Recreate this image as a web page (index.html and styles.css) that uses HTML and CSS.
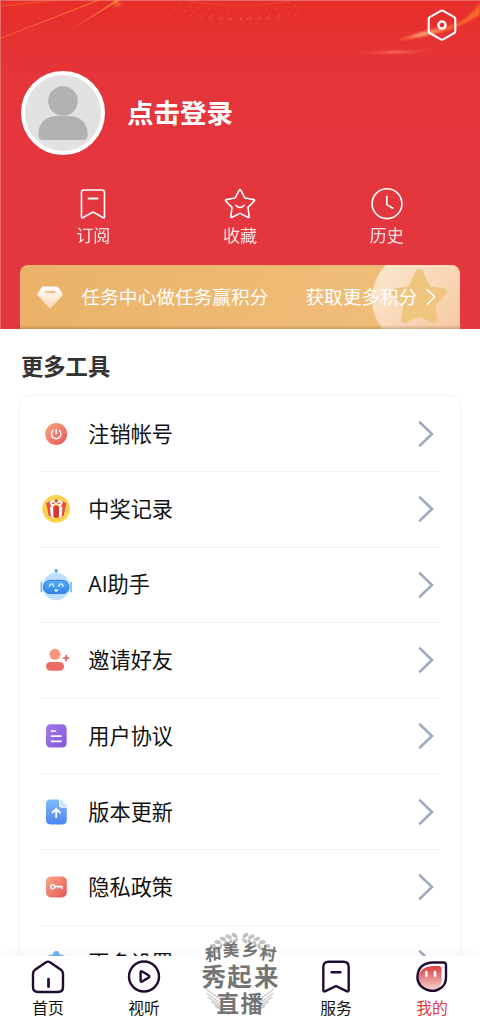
FILE: index.html
```html
<!DOCTYPE html>
<html lang="zh-CN">
<head>
<meta charset="utf-8">
<meta name="viewport" content="width=device-width">
<title>我的</title>
<link rel="stylesheet" href="styles.css">
</head>
<body>
<div class="app">
  <header class="hero">
    <svg class="hero-art" width="480" height="80" viewBox="0 0 480 80">
      <defs>
        <linearGradient id="ray" x1="0" x2="1" y1="1" y2="0"><stop offset="0" stop-color="#ff8a3c" stop-opacity=".45"/><stop offset="1" stop-color="#ff9a35" stop-opacity=".75"/></linearGradient>
        <linearGradient id="ray2" x1="0" x2="1" y1="1" y2="0"><stop offset="0" stop-color="#ff7a2c" stop-opacity="0"/><stop offset="1" stop-color="#ffa045"/></linearGradient>
        <linearGradient id="flare" gradientUnits="userSpaceOnUse" x1="395" y1="41" x2="480" y2="8"><stop offset="0" stop-color="#ff6a20" stop-opacity=".6"/><stop offset=".3" stop-color="#ffa27a"/><stop offset=".65" stop-color="#ff7030" stop-opacity=".8"/><stop offset="1" stop-color="#ff7a2c" stop-opacity=".75"/></linearGradient>
        <linearGradient id="flare2" gradientUnits="userSpaceOnUse" x1="350" y1="53" x2="440" y2="45"><stop offset="0" stop-color="#ff7040" stop-opacity=".1"/><stop offset=".5" stop-color="#ff8a70" stop-opacity=".85"/><stop offset="1" stop-color="#ff6030" stop-opacity=".15"/></linearGradient>
        <filter id="soft" x="-20%" y="-50%" width="140%" height="200%"><feGaussianBlur stdDeviation=".8"/></filter>
        <filter id="glow" x="-100%" y="-100%" width="300%" height="300%"><feGaussianBlur stdDeviation="2"/></filter>
      </defs>
      <path d="M0 38.5 99 0" stroke="url(#ray)" fill="none"/>
      <path d="M0 6 60 0" stroke="#ff7a30" stroke-opacity=".3" stroke-width="2" fill="none"/>
      <path d="M69 31 118 0" stroke="url(#ray2)" stroke-width="1.3" fill="none"/>
      <circle cx="117" cy="3" r="2.6" fill="#ff9440" filter="url(#glow)"/>
      <g fill="none" stroke="#ff9a88" stroke-opacity=".28" stroke-width="1.4" stroke-dasharray="1.6 8">
        <path d="M174 8q66 20 132 0"/><path d="M184 14q56 10 115 0" stroke-dashoffset="4"/><path d="M180 4q60 13 124 0"/><path d="M195 18q45 3 92 0" stroke-dashoffset="3"/>
      </g>
      <path d="M188 1q52 9 104 0" fill="none" stroke="#ff8b70" stroke-opacity=".18" stroke-width="1.5"/>
      <path d="M395 41Q425 30 445 27T480 3V15Q462 26 445 31T395 41Z" fill="url(#flare)" filter="url(#soft)"/>
      <path d="M352 53.5Q385 50.5 405 51T441 46Q425 53 405 53T352 53.5Z" fill="url(#flare2)" filter="url(#soft)"/>
    </svg>
    <div class="topbar">
      <svg class="settings" width="30" height="34" viewBox="0 0 30 34" fill="none" stroke="#fff" stroke-linejoin="round"><path stroke-width="2.1" d="M13.8 1.8Q15 1.1 16.2 1.8L27.3 8.2Q28.3 8.8 28.3 10V22.2Q28.3 23.4 27.3 24L16.2 30.4Q15 31.1 13.8 30.4L2.7 24Q1.7 23.4 1.7 22.2V10Q1.7 8.8 2.7 8.2Z"/><circle cx="15" cy="16.1" r="3.6" stroke-width="2.3"/></svg>
    </div>
    <div class="profile">
      <div class="avatar">
        <svg width="50" height="55" viewBox="0 0 50 55" fill="#b2b2b2"><circle cx="25" cy="15" r="14.8"/><path d="M.3 48C.3 36 9 30 19 30H31C41 30 49.7 36 49.7 48V49Q49.7 54 44.7 54H5.3Q.3 54 .3 49Z"/></svg>
      </div>
      <span class="login">点击登录</span>
    </div>
    <div class="shortcuts">
      <a class="shortcut">
        <svg width="34" height="34" viewBox="0 0 34 34"><path d="M8 3H26Q28.5 3 28.5 5.5V29.5Q28.5 31.5 26.8 30.5L17 25 7.2 30.5Q5.5 31.5 5.5 29.5V5.5Q5.5 3 8 3Z"/><path d="M12.5 11.5H21.5" stroke-width="2"/></svg>
        <span>订阅</span>
      </a>
      <a class="shortcut">
        <svg width="34" height="34" viewBox="0 0 34 34"><path d="M16.2 3.2Q17 2 17.8 3.2L21.9 11 30.8 12.6Q32.1 13 31.2 14.1L25 20.4 26.2 29.4Q26.2 30.8 24.9 30.3L17 26.4 9.1 30.3Q7.8 30.8 7.8 29.4L9 20.4 2.8 14.1Q1.9 13 3.2 12.6L12.1 11Z"/><path d="M12.9 18.4Q17 22.6 21.1 18.4"/></svg>
        <span>收藏</span>
      </a>
      <a class="shortcut">
        <svg width="34" height="34" viewBox="0 0 34 34"><circle cx="17" cy="16.7" r="14.9"/><path d="M16.8 9.3V17.6L22.8 21.3"/></svg>
        <span>历史</span>
      </a>
    </div>
    <div class="banner">
      <svg class="banner-art" width="90" height="64" viewBox="0 0 90 64">
        <defs><linearGradient id="disc" x1="0" y1="0" x2="1" y2="1"><stop offset="0" stop-color="#fdebd4"/><stop offset="1" stop-color="#f5c49a"/></linearGradient></defs>
        <circle cx="50" cy="34" r="48" fill="url(#disc)"/>
        <path d="M49.3 8 57.4 25.2 72.5 27.2 60.8 39.8 63.6 54 49.3 47.2 35 54 37.8 39.8 26.1 27.2 41.2 25.2Z" fill="#f0c580" stroke="#f0c580" stroke-width="8" stroke-linejoin="round"/>
      </svg>
      <svg class="gem" width="26" height="23" viewBox="0 0 26 23"><defs><linearGradient id="gemfill" x1="0" y1="0" x2="0" y2="1"><stop stop-color="#fff"/><stop offset="1" stop-color="#ffd5b3"/></linearGradient></defs><path d="M6.3 .5H19.7Q20.8 .5 21.5 1.4L25.3 7.3Q26 8.5 25.1 9.6L14.4 21.5Q13 23 11.6 21.5L.9 9.6Q0 8.5 .7 7.3L4.5 1.4Q5.2 .5 6.3 .5Z" fill="url(#gemfill)"/><path d="M8.7 6.1H17.5" stroke="#efbd80" stroke-width="2" stroke-linecap="round"/></svg>
      <span class="task">任务中心做任务赢积分</span>
      <span class="more">获取更多积分</span>
      <svg class="banner-arrow" width="10" height="18" viewBox="0 0 10 18"><path d="M1.2 1.6 8.8 8.8 1.2 16.2" fill="none" stroke="#fff" stroke-width="1.5" stroke-linecap="round" stroke-linejoin="round"/></svg>
    </div>
  </header>

  <main class="tools">
    <h2>更多工具</h2>
    <ul class="card">
      <li class="row">
        <svg class="icon" width="32" height="32" viewBox="0 0 32 32"><defs><linearGradient id="coral" x1="0" y1="0" x2="1" y2="1"><stop stop-color="#fba783"/><stop offset="1" stop-color="#e4575a"/></linearGradient></defs><circle cx="16.2" cy="16" r="11" fill="url(#coral)"/><path d="M16.2 11.5V15.4M13 12.6A4.7 4.7 0 1 0 19.4 12.6" fill="none" stroke="#fff" stroke-width="1.4" stroke-linecap="round"/></svg>
        <span>注销帐号</span><svg class="arrow" viewBox="0 0 16 28"><path d="M2 2.5 14 14 2 25.5"/></svg>
      </li>
      <li class="row">
        <svg class="icon" width="32" height="32" viewBox="0 0 32 32"><circle cx="16.2" cy="15.8" r="13.9" fill="#fcd251"/><path d="M6.5 11 11.5 9.5V24.5L8.6 22.5ZM20.8 9.5 26 11 23.7 22.5 20.8 24.5Z" fill="#e04b3c"/><path d="M9.8 12.5 13.4 12V24.6L10.8 23.8ZM19 12 22.6 12.5 21.6 23.8 19 24.6Z" fill="#fff"/><path d="M13.4 13.5 16.2 12.5 19 13.5V24L16.2 25 13.4 24Z" fill="#d63a36"/><path d="M6 10.2 11 7.6 14 12 9.5 14.5 7.2 14ZM26.4 10.2 21.4 7.6 18.4 12 22.9 14.5 25.2 14Z" fill="#ee5147"/><path d="M9.4 9 12.6 6.8 16.2 9.6 19.8 6.8 23 9 21 13.2 17.8 11.4H14.6L11.4 13.2Z" fill="#fff"/><circle cx="16.2" cy="7.9" r="1.7" fill="#e44945"/><path d="M12.2 9.8 14.6 10.7M20.2 9.8 17.8 10.7" stroke="#e04b3c" stroke-width="1.3"/></svg>
        <span>中奖记录</span><svg class="arrow" viewBox="0 0 16 28"><path d="M2 2.5 14 14 2 25.5"/></svg>
      </li>
      <li class="row">
        <svg class="icon" width="32" height="34" viewBox="0 0 32 34"><defs><linearGradient id="visor" x1="0" y1="0" x2="0" y2="1"><stop stop-color="#58adfa"/><stop offset="1" stop-color="#3385e6"/></linearGradient></defs><path d="M16.2 2.5V6" stroke="#4a9ff4" stroke-width="1.3"/><circle cx="16.2" cy="2.5" r="1.6" fill="#4a9ff4"/><circle cx="16.2" cy="18.5" r="13.7" fill="#bfe0fb"/><path d="M1.4 14.4V23.6M31 14.4V23.6" stroke="#72b9f5" stroke-width="1.7" stroke-linecap="round"/><rect x="3.5" y="12.4" width="25.4" height="13.2" rx="6.4" fill="url(#visor)" stroke="#2c7bdf" stroke-width="1"/><path d="M9.4 18.3Q10 15.8 11.6 15.8T13.7 18.3M18.7 18.3Q19.2 15.8 20.9 15.8T23 18.3" fill="none" stroke="#e4f4ff" stroke-width="1.3" stroke-linecap="round"/><path d="M14 21.6H18.4Q17.8 23.8 16.2 23.8T14 21.6Z" fill="#fff"/></svg>
        <span class="latin-mix">AI助手</span><svg class="arrow" viewBox="0 0 16 28"><path d="M2 2.5 14 14 2 25.5"/></svg>
      </li>
      <li class="row">
        <svg class="icon" width="32" height="32" viewBox="0 0 32 32"><circle cx="15" cy="10.3" r="5.5" fill="#fa967b"/><rect x="6" y="18" width="18" height="8.8" rx="4.4" fill="#ec6c65"/><path d="M26.2 11.1V17.3M23.1 14.2H29.3" stroke="#e4636a" stroke-width="1.8"/></svg>
        <span>邀请好友</span><svg class="arrow" viewBox="0 0 16 28"><path d="M2 2.5 14 14 2 25.5"/></svg>
      </li>
      <li class="row">
        <svg class="icon" width="32" height="32" viewBox="0 0 32 32"><defs><linearGradient id="violet" x1="0" y1="0" x2="1" y2="1"><stop stop-color="#a27be9"/><stop offset="1" stop-color="#8057de"/></linearGradient></defs><rect x="6" y="4.2" width="20.6" height="23.4" rx="4.4" fill="url(#violet)"/><path d="M11.5 11H15.4M11.5 16.2H21M11.5 21.4H21" stroke="#fff" stroke-width="1.7" stroke-linecap="round"/></svg>
        <span>用户协议</span><svg class="arrow" viewBox="0 0 16 28"><path d="M2 2.5 14 14 2 25.5"/></svg>
      </li>
      <li class="row">
        <svg class="icon" width="32" height="32" viewBox="0 0 32 32"><defs><linearGradient id="azure" x1="0" y1="0" x2="0" y2="1"><stop stop-color="#80baf6"/><stop offset="1" stop-color="#4d85f2"/></linearGradient></defs><path d="M10.4 3.6H19V8.5Q19 11.8 22.3 11.8H26.8V24Q26.8 28.4 22.4 28.4H10.4Q6 28.4 6 24V8Q6 3.6 10.4 3.6Z" fill="url(#azure)"/><path d="M20.7 4Q21.4 8 26.5 10.2H22.7Q20.7 10.2 20.7 8.2ZM21 4 26.5 9.8" fill="#c4e2ff" stroke="#c4e2ff"/><path d="M16.2 21.3V13.2M12.5 16.5 16.2 12.8 19.9 16.5" fill="none" stroke="#fff" stroke-width="1.8" stroke-linecap="round" stroke-linejoin="round"/></svg>
        <span>版本更新</span><svg class="arrow" viewBox="0 0 16 28"><path d="M2 2.5 14 14 2 25.5"/></svg>
      </li>
      <li class="row">
        <svg class="icon" width="32" height="32" viewBox="0 0 32 32"><rect x="6" y="5.4" width="20.8" height="21" rx="4.8" fill="url(#coral)"/><path d="M15.2 15.5H21.9V17.9M18.9 15.5V17.3" fill="none" stroke="#fff" stroke-width="1.5"/><circle cx="12.8" cy="15.8" r="2" fill="none" stroke="#fff" stroke-width="1.5"/></svg>
        <span>隐私政策</span><svg class="arrow" viewBox="0 0 16 28"><path d="M2 2.5 14 14 2 25.5"/></svg>
      </li>
      <li class="row">
        <svg class="icon" width="32" height="32" viewBox="0 0 32 32"><path d="M13.2 7Q13.2 4 16.2 4T19.2 7L24.8 8.8V24L16 28 7.6 24V8.8Z" fill="#72aff3"/></svg>
        <span>更多设置</span><svg class="arrow" viewBox="0 0 16 28"><path d="M2 2.5 14 14 2 25.5"/></svg>
      </li>
    </ul>
  </main>

  <nav class="tabs">
    <a class="tab"><svg width="34" height="34" viewBox="0 0 34 34"><path d="M14.7 2.4Q17 .8 19.3 2.4L29.6 9.6Q32 11.3 32 14V27Q32 32 27 32H7Q2 32 2 27V14Q2 11.3 4.4 9.6Z"/><path d="M17.5 19V26.7" stroke-width="2.7"/></svg><span>首页</span></a>
    <a class="tab"><svg width="34" height="34" viewBox="0 0 34 34"><circle cx="17" cy="16.5" r="15"/><path d="M13.6 12.5Q13.6 10.6 15.3 11.5L21.4 15.2Q23.3 16.5 21.4 17.7L15.3 21.4Q13.6 22.3 13.6 20.4Z"/></svg><span>视听</span></a>
    <a class="tab live">
      <svg class="live-logo" width="84" height="92" viewBox="0 0 84 92">
        <defs>
          <g id="leaf"><ellipse cx="42" cy="7" rx="3.4" ry="1.9" transform="rotate(-42 42 7)"/><ellipse cx="42" cy="12.4" rx="3.2" ry="1.7" transform="rotate(38 42 12.4)"/></g>
          <g id="branch"><use href="#leaf" transform="rotate(8 42 46)"/><use href="#leaf" transform="rotate(17 42 46)"/><use href="#leaf" transform="rotate(26 42 46)"/><use href="#leaf" transform="rotate(35 42 46)"/><use href="#leaf" transform="rotate(44 42 46)"/><use href="#leaf" transform="rotate(53 42 46)"/></g>
          <g id="grain" fill="none" stroke="#cbcbcb" stroke-width="1.5"><path d="M61 72 76 61M61 75.5 75.5 65M60 79 74 69M57 83 71 73.5M53 86.5 67 78"/></g>
        </defs>
        <circle cx="42" cy="46" r="44" fill="#fff"/>
        <g fill="#c2c2c2"><use href="#branch"/><use href="#branch" transform="translate(84) scale(-1 1)"/></g>
        <use href="#grain"/><use href="#grain" transform="translate(84) scale(-1 1)"/>
        <g class="live-small"><text transform="translate(7.5 33.5) rotate(-9) skewX(-5)">和</text><text transform="translate(25 28.5) rotate(-3)">美</text><text transform="translate(43.5 27.5) rotate(5)">乡</text><text transform="translate(61 30.5) rotate(9)">村</text></g>
        <g class="live-big"><text x="3.5" y="57.5">秀</text><text x="29.3" y="57.5">起</text><text x="56" y="57.5">来</text></g>
        <g class="live-mid"><text x="18.5" y="83.5">直</text><text x="42.5" y="83.5">播</text></g>
      </svg>
    </a>
    <a class="tab"><svg width="34" height="34" viewBox="0 0 34 34"><path d="M9.5 1.8H24.5Q29.7 1.8 29.7 7V29.8Q29.7 32.2 27.5 31.2L17 26 6.5 31.2Q4.3 32.2 4.3 29.8V7Q4.3 1.8 9.5 1.8Z"/><path d="M12.7 12.3H21.3" stroke-width="2.5"/></svg><span>服务</span></a>
    <a class="tab active"><svg width="34" height="34" viewBox="0 0 34 34"><defs><linearGradient id="face" x1="0" y1="0" x2="0" y2="1"><stop stop-color="#df3941"/><stop offset="1" stop-color="#faded9"/></linearGradient></defs><path d="M18 6H23.5Q26.5 6 26.5 9V17A11.8 11.8 0 1 1 3.5 17Q4.5 7 18 6Z" fill="url(#face)" stroke="none"/><path d="M17 2.5H28.5Q31 2.5 31 5V17Q31 24 26.5 27.5Q21 32 14.5 30.5Q2.5 27.5 2.4 17Q3 3.5 17 2.5Z"/><path d="M11.4 12V16M20 12V16" stroke="#fff" stroke-width="2.6"/></svg><span>我的</span></a>
  </nav>
</div>
</body>
</html>
```
FILE: styles.css
```css
* { box-sizing: border-box; }
body {
  margin: 0;
  font-family: "Noto Sans CJK SC", sans-serif;
  color: #111;
  background: #fff;
}
.app {
  display: flex;
  flex-direction: column;
  width: 480px;
  height: 1022px;
  overflow: hidden;
}
.hero {
  position: relative;
  flex: none;
  display: flex;
  flex-direction: column;
  height: 329px;
  overflow: hidden;
  background: linear-gradient(#e72e29 0, #e4353a 75px, #e33741 329px);
  box-shadow: inset 1px 1px #e96a68;
}
.hero-art { position: absolute; left: 0; top: 0; }
.topbar {
  position: relative;
  display: flex;
  justify-content: flex-end;
  height: 71px;
  padding: 9px 23px 0 0;
}
.profile {
  display: flex;
  align-items: center;
  gap: 22px;
  height: 84px;
  padding-left: 21px;
}
.avatar {
  display: flex;
  justify-content: center;
  width: 84px;
  height: 84px;
  padding-top: 11px;
  border: 4px solid #fff;
  border-radius: 50%;
  background: #e2e2e2;
}
.login {
  padding-bottom: 2px;
  font-size: 26.5px;
  line-height: 36px;
  font-weight: 700;
  color: #fff;
}
.shortcuts {
  display: grid;
  grid-template-columns: repeat(3, 146.7px);
  justify-content: center;
  height: 110px;
  padding-top: 32px;
}
.shortcut {
  display: flex;
  flex-direction: column;
  align-items: center;
  gap: 2px;
  font-size: 17px;
  line-height: 24px;
  color: #fff;
}
.shortcut svg {
  fill: none;
  stroke: #fff;
  stroke-width: 1.6;
  stroke-linecap: round;
  stroke-linejoin: round;
}
.shortcut span { opacity: .88; }
.banner {
  position: relative;
  display: flex;
  align-items: center;
  height: 64px;
  margin: 0 20px;
  padding-left: 17px;
  border-radius: 8px 8px 0 0;
  overflow: hidden;
  font-size: 18.7px;
  line-height: 28px;
  white-space: nowrap;
  color: #fff;
  background: linear-gradient(110deg, #eab268, #f1c07d);
}
.banner::after {
  content: "";
  position: absolute;
  left: 0;
  right: 0;
  bottom: 0;
  height: 4px;
  background: linear-gradient(transparent, rgba(115, 75, 35, .3));
}
.banner-art { position: absolute; right: 0; top: 0; }
.gem, .task, .more, .banner-arrow { position: relative; flex: none; }
.task, .more { padding-bottom: 2px; }
.task { margin-left: 18.5px; }
.more { margin-left: 37px; }
.banner-arrow { margin-left: 8px; }
.tools {
  flex: 1;
  min-height: 0;
  padding: 19px 20px 0;
  overflow: hidden;
}
h2 {
  margin: 0 0 14.4px 1px;
  font-size: 22.3px;
  line-height: 34px;
  font-weight: 700;
  color: #333;
}
.card {
  margin: 0;
  padding: 0 20px;
  list-style: none;
  border-radius: 9px;
  box-shadow: 0 0 4px rgba(0, 0, 0, .07);
}
.row {
  display: flex;
  align-items: center;
  height: 75.6px;
  border-bottom: 1px solid #f1f1f2;
  font-size: 21.2px;
  line-height: 32px;
}
.icon { flex: none; margin-right: 16.3px; }
.row span { flex: 1; padding-bottom: 2px; }
.latin-mix { font-family: "Open Sans", "Noto Sans CJK SC", sans-serif; }
.arrow {
  width: 16px;
  height: 28px;
  margin-right: 6.4px;
  fill: none;
  stroke: #a0abc0;
  stroke-width: 2.6;
  stroke-linecap: round;
}
.tabs {
  position: relative;
  flex: none;
  display: grid;
  grid-template-columns: repeat(5, 96px);
  height: 66px;
  background: #fff;
  box-shadow: 0 -2px 14px rgba(0, 0, 0, .04);
}
.tab {
  display: flex;
  flex-direction: column;
  align-items: center;
  gap: 3px;
  padding-top: 4px;
  font-size: 15.8px;
  line-height: 22px;
}
.tab > svg:not(.live-logo) {
  flex: none;
  fill: none;
  stroke: #200c32;
  stroke-width: 2.4;
  stroke-linecap: round;
  stroke-linejoin: round;
}
.active { color: #dc3c46; }
.live { position: relative; }
.live-logo { position: absolute; left: 6px; top: -28px; }
.live-logo text { fill: #757575; font-weight: 700; }
.live-small { font-size: 16.5px; }
.live-big { font-size: 24.5px; }
.live-mid { font-size: 22.5px; }
```
